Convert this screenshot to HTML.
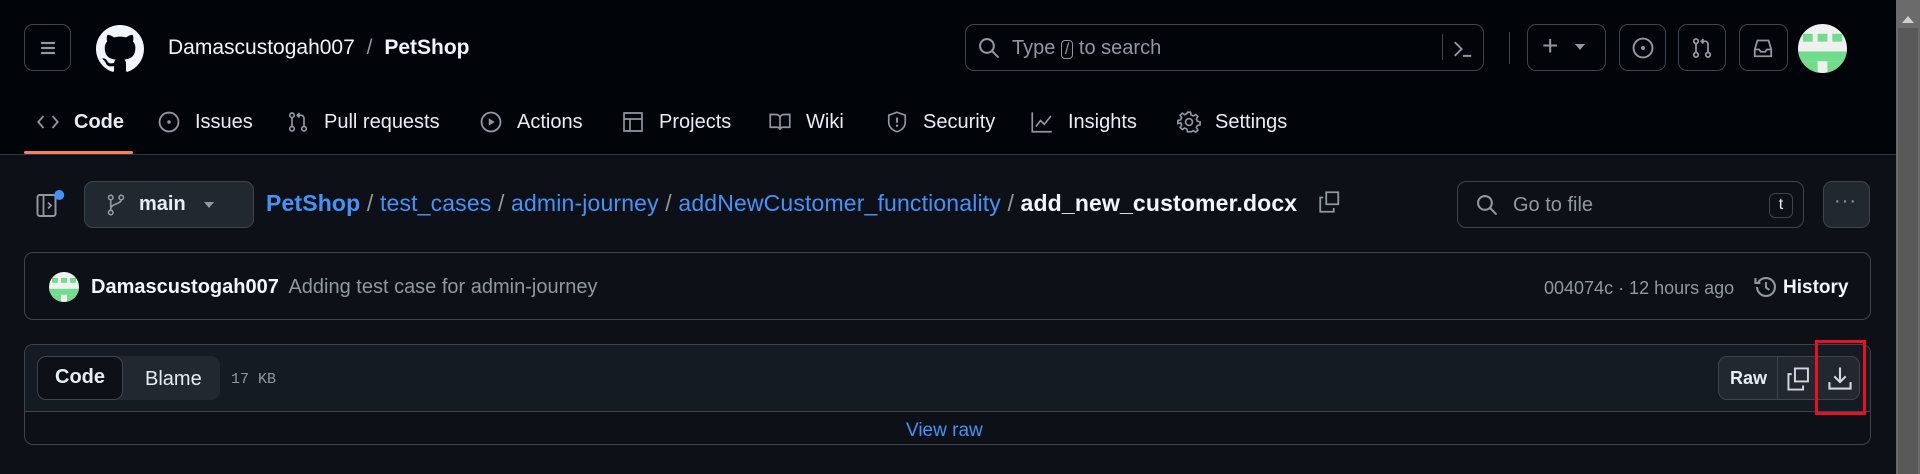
<!DOCTYPE html>
<html><head><meta charset="utf-8"><style>
*{box-sizing:border-box;margin:0;padding:0}
body{width:1920px;height:474px;overflow:hidden;background:#0d1117;font-family:"Liberation Sans",sans-serif;color:#e6edf3;position:relative}
.a{position:absolute}
svg{display:block}
.hdr{left:0;top:0;width:1896px;height:155px;background:#010409;border-bottom:1px solid #30363d}
.btn{border:1px solid #3d444d;border-radius:9px}
.tab{top:107px;height:30px;display:flex;align-items:center;font-size:20px;color:#e6edf3}
.tab svg{margin-right:14px}
.sb{left:1896px;top:0;width:24px;height:474px;background:#6b6b6b}
</style></head><body>
<div class="a hdr"></div>
<div class="a btn" style="left:24px;top:24px;width:47px;height:47px;"></div>
<svg class="a" style="left:36px;top:36px" width="24" height="24" viewBox="0 0 24 24"><path d="M6 7h12M6 12h12M6 17h12" stroke="#9198a1" stroke-width="2.2" stroke-linecap="round"/></svg>
<svg class="a" style="left:96px;top:25px" width="48" height="48" viewBox="0 0 16 16"><path fill="#f0f6fc" d="M8 0C3.58 0 0 3.58 0 8c0 3.54 2.29 6.530 5.47 7.59.4.07.55-.17.55-.38 0-.19-.01-.82-.01-1.49-2.01.37-2.530-.49-2.69-.94-.09-.23-.48-.94-.82-1.13-.28-.15-.68-.52-.01-.53.63-.01 1.08.58 1.23.82.72 1.21 1.87.87 2.33.66.07-.52.28-.87.51-1.07-1.78-.2-3.64-.89-3.64-3.95 0-.87.31-1.59.82-2.15-.08-.2-.36-1.02.08-2.12 0 0 .67-.21 2.2.82.64-.18 1.32-.27 2-.27.68 0 1.36.09 2 .27 1.53-1.04 2.2-.82 2.2-.82.44 1.1.16 1.92.08 2.12.51.56.82 1.27.82 2.15 0 3.07-1.87 3.75-3.65 3.950.29.25.54.73.54 1.48 0 1.07-.01 1.93-.01 2.2 0 .21.15.46.55.38A8.013 8.013 0 0016 8c0-4.42-3.58-8-8-8z"/></svg>
<div class="a" style="left:168px;top:36px;font-size:21px;color:#f0f6fc">Damascustogah007 <span style="color:#9198a1;margin:0 6px">/</span> <b style="font-weight:600">PetShop</b></div>
<div class="a btn" style="left:965px;top:24px;width:519px;height:47px;"></div>
<svg class="a" style="left:978px;top:37px" width="22" height="22" viewBox="0 0 16 16"><circle cx="6.5" cy="6.5" r="5" fill="none" stroke="#9198a1" stroke-width="1.5"/><path d="M10.2 10.2l4.3 4.3" stroke="#9198a1" stroke-width="1.5" stroke-linecap="round"/></svg>
<div class="a" style="left:1012px;top:37px;font-size:20px;color:#9198a1">Type <span style="border:1px solid #9198a1;border-radius:4px;padding:0 3px;font-size:16px">/</span> to search</div>
<div class="a" style="left:1442px;top:34px;width:1px;height:26px;background:#3d444d"></div>
<svg class="a" style="left:1452px;top:38px" width="22" height="22" viewBox="0 0 16 16"><path d="M2 3l5 5-5 5M8 13h6" stroke="#9198a1" stroke-width="1.4" fill="none"/></svg>
<div class="a" style="left:1509px;top:32px;width:1px;height:32px;background:#3d444d"></div>
<div class="a btn" style="left:1527px;top:24px;width:79px;height:47px;"></div>
<div class="a" style="left:1542px;top:30px;font-size:28px;color:#9198a1">+</div>
<div class="a" style="left:1575px;top:44px;border:5px solid transparent;border-top:6px solid #9198a1"></div>
<div class="a btn" style="left:1619px;top:24px;width:47px;height:47px;"></div>
<svg class="a" style="left:1631px;top:36px" width="24" height="24" viewBox="0 0 16 16"><circle cx="8" cy="8" r="6.3" fill="none" stroke="#9198a1" stroke-width="1.3"/><circle cx="8" cy="8" r="1.3" fill="#9198a1"/></svg>
<div class="a btn" style="left:1678px;top:24px;width:48px;height:47px;"></div>
<svg class="a" style="left:1690px;top:36px" width="24" height="24" viewBox="0 0 16 16"><g fill="none" stroke="#9198a1" stroke-width="1.2"><circle cx="4" cy="3.5" r="1.5"/><circle cx="4" cy="12.5" r="1.5"/><circle cx="12" cy="12.5" r="1.5"/><path d="M4 5v6M12 11V5.5a2 2 0 00-2-2H7.5M9 2l-1.5 1.5L9 5"/></g></svg>
<div class="a btn" style="left:1739px;top:24px;width:49px;height:47px;"></div>
<svg class="a" style="left:1751px;top:36px" width="24" height="24" viewBox="0 0 16 16"><path d="M2.5 9l1.8-6h7.4l1.8 6v4.5h-11zM2.5 9h3l1 1.5h3l1-1.5h3" fill="none" stroke="#9198a1" stroke-width="1.2"/></svg>
<svg class="a" style="left:1798px;top:24px" width="49" height="49" viewBox="0 0 10 10"><clipPath id="c"><circle cx="5" cy="5" r="5"/></clipPath><g clip-path="url(#c)"><rect width="10" height="10" fill="#f0f0f0"/><rect x="1" y="2" width="2" height="1.6" fill="#6fdd8b"/><rect x="4" y="2" width="2" height="1.6" fill="#6fdd8b"/><rect x="7" y="2" width="2" height="1.6" fill="#6fdd8b"/><rect x="0" y="5.6" width="10" height="2" fill="#6fdd8b"/><rect x="0" y="7.6" width="4" height="3" fill="#6fdd8b"/><rect x="6" y="7.6" width="4" height="3" fill="#6fdd8b"/></g></svg>
<div class="a tab" style="left:36px"><svg width="24" height="24" viewBox="0 0 16 16"><path d="M5 4L1.5 8 5 12M11 4l3.5 4-3.5 4" fill="none" stroke="#9198a1" stroke-width="1.2"/></svg><b style="font-weight:600">Code</b></div>
<div class="a" style="left:24px;top:151px;width:109px;height:3px;background:#f78166;border-radius:2px"></div>
<div class="a tab" style="left:157px"><svg width="24" height="24" viewBox="0 0 16 16"><circle cx="8" cy="8" r="6.3" fill="none" stroke="#9198a1" stroke-width="1.2"/><circle cx="8" cy="8" r="1.2" fill="#9198a1"/></svg>Issues</div>
<div class="a tab" style="left:286px"><svg width="24" height="24" viewBox="0 0 16 16"><g fill="none" stroke="#9198a1" stroke-width="1.1"><circle cx="4" cy="3.5" r="1.5"/><circle cx="4" cy="12.5" r="1.5"/><circle cx="12" cy="12.5" r="1.5"/><path d="M4 5v6M12 11V5.5a2 2 0 00-2-2H7.5M9 2l-1.5 1.5L9 5"/></g></svg>Pull requests</div>
<div class="a tab" style="left:479px"><svg width="24" height="24" viewBox="0 0 16 16"><circle cx="8" cy="8" r="6.3" fill="none" stroke="#9198a1" stroke-width="1.2"/><path d="M6.5 5.5v5l4-2.5z" fill="#9198a1"/></svg>Actions</div>
<div class="a tab" style="left:621px"><svg width="24" height="24" viewBox="0 0 16 16"><path d="M2 2h12v12H2zM2 6h12M6 6v8" fill="none" stroke="#9198a1" stroke-width="1.1"/></svg>Projects</div>
<div class="a tab" style="left:768px"><svg width="24" height="24" viewBox="0 0 16 16"><path d="M1.5 3h4a2.5 2.5 0 012.5 2.5V13a2 2 0 00-2-1.5H1.5zM14.5 3h-4A2.5 2.5 0 008 5.5V13a2 2 0 012-1.5h4.5z" fill="none" stroke="#9198a1" stroke-width="1.1"/></svg>Wiki</div>
<div class="a tab" style="left:885px"><svg width="24" height="24" viewBox="0 0 16 16"><path d="M8 1.5l5.5 2v4.5c0 3.5-2.5 5.5-5.5 6.5-3-1-5.5-3-5.5-6.5V3.5z" fill="none" stroke="#9198a1" stroke-width="1.1"/><path d="M8 5v3.5" stroke="#9198a1" stroke-width="1.3"/><circle cx="8" cy="10.5" r=".8" fill="#9198a1"/></svg>Security</div>
<div class="a tab" style="left:1030px"><svg width="24" height="24" viewBox="0 0 16 16"><path d="M1.5 1.5v13h13M4 11l3-4 2.5 2.5L14 4" fill="none" stroke="#9198a1" stroke-width="1.1"/></svg>Insights</div>
<div class="a tab" style="left:1177px"><svg width="24" height="24" viewBox="0 0 16 16"><circle cx="8" cy="8" r="2.3" fill="none" stroke="#9198a1" stroke-width="1.1"/><path d="M7 1.5h2l.4 1.8 1.5.7 1.6-1 1.4 1.4-1 1.6.7 1.5 1.8.4v2l-1.8.4-.7 1.5 1 1.6-1.4 1.4-1.6-1-1.5.7L9 14.5H7l-.4-1.8-1.5-.7-1.6 1-1.4-1.4 1-1.6-.7-1.5L.6 9V7l1.8-.4.7-1.5-1-1.6 1.4-1.4 1.6 1 1.5-.7z" fill="none" stroke="#9198a1" stroke-width="1.1"/></svg>Settings</div>
<svg class="a" style="left:36px;top:188px" width="30" height="32" viewBox="0 0 20 20"><rect x="1" y="4" width="12" height="14" rx="1.5" fill="none" stroke="#9198a1" stroke-width="1.3"/><path d="M5 4v14M8 9l2 2-2 2" fill="none" stroke="#9198a1" stroke-width="1.2"/><circle cx="15.5" cy="4" r="3.3" fill="#4493f8"/></svg>
<div class="a btn" style="left:84px;top:181px;width:170px;height:47px;background:#212830"></div>
<svg class="a" style="left:104px;top:192px" width="24" height="26" viewBox="0 0 16 16"><g fill="none" stroke="#9198a1" stroke-width="1.1"><circle cx="4.5" cy="3" r="1.5"/><circle cx="11.5" cy="3" r="1.5"/><circle cx="4.5" cy="13" r="1.5"/><path d="M4.5 4.5v7M11.5 4.5c0 3-7 2.5-7 6"/></g></svg>
<div class="a" style="left:139px;top:193px;font-size:20px;font-weight:600">main</div>
<div class="a" style="left:204px;top:202px;border:5px solid transparent;border-top:6px solid #9198a1"></div>
<div class="a" style="left:266px;top:190px;font-size:23px;letter-spacing:0.15px;color:#4493f8;white-space:nowrap"><b style="font-weight:600">PetShop</b><span style="color:#9198a1"> / </span>test_cases<span style="color:#9198a1"> / </span>admin-journey<span style="color:#9198a1"> / </span>addNewCustomer_functionality<span style="color:#9198a1"> / </span><b style="color:#f0f6fc;font-weight:600">add_new_customer.docx</b></div>
<svg class="a" style="left:1318px;top:189px" width="24" height="26" viewBox="0 0 16 16"><path d="M5.5 1.5h8v8h-8zM3.5 5H1.5v9.5h9V12" fill="none" stroke="#9198a1" stroke-width="1.2"/></svg>
<div class="a btn" style="left:1457px;top:181px;width:347px;height:47px;"></div>
<svg class="a" style="left:1476px;top:194px" width="22" height="22" viewBox="0 0 16 16"><circle cx="6.5" cy="6.5" r="5" fill="none" stroke="#9198a1" stroke-width="1.5"/><path d="M10.2 10.2l4.3 4.3" stroke="#9198a1" stroke-width="1.5" stroke-linecap="round"/></svg>
<div class="a" style="left:1513px;top:194px;font-size:20px;color:#9198a1">Go to file</div>
<div class="a" style="left:1769px;top:193px;width:24px;height:25px;border:1px solid #3d444d;border-radius:6px;font-size:16px;color:#e6edf3;text-align:center;line-height:22px">t</div>
<div class="a btn" style="left:1823px;top:181px;width:47px;height:47px;background:#212830"></div>
<div class="a" style="left:1834px;top:190px;font-size:20px;color:#9198a1;letter-spacing:1px">···</div>
<div class="a" style="left:24px;top:252px;width:1847px;height:68px;border:1px solid #3d444d;border-radius:9px"></div>
<svg class="a" style="left:49px;top:272px" width="30" height="30" viewBox="0 0 10 10"><clipPath id="d"><circle cx="5" cy="5" r="5"/></clipPath><g clip-path="url(#d)"><rect width="10" height="10" fill="#f0f0f0"/><rect x="1" y="2" width="2" height="1.6" fill="#6fdd8b"/><rect x="4" y="2" width="2" height="1.6" fill="#6fdd8b"/><rect x="7" y="2" width="2" height="1.6" fill="#6fdd8b"/><rect x="0" y="5.6" width="10" height="2" fill="#6fdd8b"/><rect x="0" y="7.6" width="4" height="3" fill="#6fdd8b"/><rect x="6" y="7.6" width="4" height="3" fill="#6fdd8b"/></g></svg>
<div class="a" style="left:91px;top:276px;font-size:20px;white-space:nowrap"><b style="font-weight:600;color:#f0f6fc">Damascustogah007</b> <span style="color:#9198a1;margin-left:4px">Adding test case for admin-journey</span></div>
<div class="a" style="left:1544px;top:278px;font-size:18px;color:#9198a1">004074c · 12 hours ago</div>
<svg class="a" style="left:1753px;top:274px" width="26" height="26" viewBox="0 0 16 16"><path d="M2.5 8a5.5 5.5 0 105.5-5.5A5.5 5.5 0 003.3 5M1.5 2.5V5.5h3" fill="none" stroke="#9198a1" stroke-width="1.3"/><path d="M8 5v3.3l2 1.5" fill="none" stroke="#9198a1" stroke-width="1.3"/></svg>
<div class="a" style="left:1783px;top:277px;font-size:19px;font-weight:600;color:#f0f6fc">History</div>
<div class="a" style="left:24px;top:344px;width:1847px;height:101px;border:1px solid #3d444d;border-radius:9px;overflow:hidden"><div style="height:67px;background:#151b23;border-bottom:1px solid #3d444d"></div></div>
<div class="a" style="left:37px;top:356px;width:183px;height:44px;background:#212830;border-radius:9px"></div>
<div class="a" style="left:37px;top:356px;width:86px;height:44px;background:#0d1117;border:1px solid #3d444d;border-radius:9px;font-size:20px;font-weight:600;text-align:center;line-height:41px">Code</div>
<div class="a" style="left:145px;top:368px;font-size:20px">Blame</div>
<div class="a" style="left:231px;top:371px;font-size:15px;color:#9198a1;font-family:'Liberation Mono',monospace">17 KB</div>
<div class="a" style="left:1718px;top:356px;width:142px;height:44px;background:#212830;border:1px solid #3d444d;border-radius:9px"></div>
<div class="a" style="left:1777px;top:357px;width:1px;height:42px;background:#3d444d"></div>
<div class="a" style="left:1730px;top:368px;font-size:18px;font-weight:600">Raw</div>
<svg class="a" style="left:1786px;top:365px" width="26" height="28" viewBox="0 0 16 16"><path d="M5.5 1.5h8v8h-8zM3.5 5H1.5v9.5h9V12" fill="none" stroke="#d1d7e0" stroke-width="1.2"/></svg>
<svg class="a" style="left:1827px;top:365px" width="26" height="26" viewBox="0 0 16 16"><path d="M8 1.5v8.5M4.5 7L8 10.5 11.5 7M1.5 10.5v4h13v-4" fill="none" stroke="#d1d7e0" stroke-width="1.3"/></svg>
<div class="a" style="left:1815px;top:340px;width:51px;height:75px;border:3px solid #e81123"></div>
<div class="a" style="left:906px;top:420px;font-size:19px;color:#4493f8">View raw</div>
<div class="a sb"></div>
<div class="a" style="left:1902px;top:16px;border:6px solid transparent;border-bottom:7px solid #d0d0d0;border-top:0"></div>
<div class="a" style="left:1898px;top:28px;width:20px;height:446px;background:#595959"></div>
</body></html>
